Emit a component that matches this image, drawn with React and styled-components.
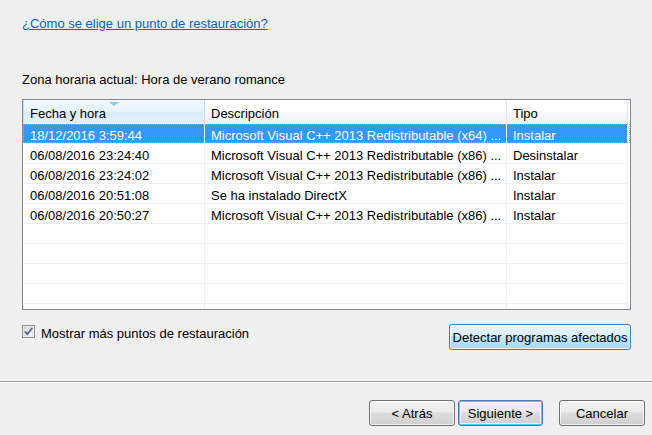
import React from "react";
import styled, { createGlobalStyle, css } from "styled-components";

const GlobalStyle = createGlobalStyle`
  html, body { margin: 0; padding: 0; background: #f0f0f0; }
  body { font-family: "Liberation Sans", Arial, sans-serif; font-size: 13px; color: #000; }
`;

const Page = styled.div`
  width: 652px;
  height: 435px;
  display: flex;
  flex-direction: column;
  background: #f0f0f0;
  overflow: hidden;
`;

const Content = styled.div`
  padding: 16px 21px 0 22px;
  display: flex;
  flex-direction: column;
`;

const HelpLink = styled.a`
  align-self: flex-start;
  color: #0066cc;
  text-decoration: underline;
  line-height: 15px;
  cursor: pointer;
`;

const Label = styled.div`
  margin-top: 41px;
  line-height: 15px;
`;

const ListView = styled.div`
  position: relative;
  margin-top: 12px;
  height: 209px;
  border: 1px solid #828790;
  background: #fff;
  overflow: hidden;
`;

const COLS = "182px 302px 121px";

const HeaderRow = styled.div`
  display: grid;
  grid-template-columns: ${COLS};
  height: 24px;
`;

const HeaderCell = styled.div`
  position: relative;
  padding: 6px 0 0 ${(p) => p.$pad || 6}px;
  line-height: 15px;
  border-right: 1px solid ${(p) => (p.$sorted ? "#c0e3f5" : "#e4e6e9")};
  background: ${(p) =>
    p.$sorted
      ? "linear-gradient(#f2f9fd 0%, #e5f3fb 50%, #d7ecf8 51%, #e4f2fa 100%)"
      : "linear-gradient(#ffffff 0%, #ffffff 45%, #f6f7f8 55%, #f2f3f4 100%)"};
  ${(p) =>
    p.$sorted &&
    css`
      box-shadow: inset 1px 0 0 #c0e3f5;
    `}
`;

const SortArrow = styled.span`
  position: absolute;
  top: 2px;
  left: 50%;
  margin-left: -5px;
  width: 0;
  height: 0;
  border-left: 5px solid transparent;
  border-right: 5px solid transparent;
  border-top: 4px solid #97c6e3;
`;

const Row = styled.div`
  position: relative;
  display: grid;
  grid-template-columns: ${COLS};
  height: 20px;
  ${(p) =>
    p.$selected &&
    css`
      color: #fff;
    `}
`;

const Cell = styled.div`
  height: 19px;
  padding: 4px 0 0 ${(p) => p.$pad || 6}px;
  box-sizing: border-box;
  line-height: 15px;
  white-space: nowrap;
  overflow: hidden;
  border-right: 1px solid ${(p) => (p.$selected ? "#fff" : "#f0f0f0")};
  border-bottom: 1px solid #f0f0f0;
  background: ${(p) => (p.$selected ? "#3399ff" : "transparent")};
  height: 20px;
`;

const FocusRing = styled.span`
  position: absolute;
  inset: 0 0 1px 0;
  outline: 1px dotted #f0a040;
  outline-offset: -1px;
  pointer-events: none;
`;

const BottomRow = styled.div`
  margin-top: 14px;
  display: flex;
  justify-content: space-between;
  align-items: flex-start;
`;

const CheckLabel = styled.label`
  display: flex;
  align-items: flex-start;
  gap: 6px;
  line-height: 15px;
`;

const CheckBox = styled.span`
  margin-top: 1px;
  width: 13px;
  height: 13px;
  display: block;
`;

const CheckText = styled.span`
  margin-top: 2px;
`;

const Button = styled.button`
  font-family: inherit;
  font-size: 13px;
  color: #000;
  height: 26px;
  width: ${(p) => p.$w}px;
  padding: 0;
  border-radius: 3px;
  line-height: 15px;
  border: 1px solid ${(p) => (p.$default || p.$hover ? "#3c7fb1" : "#707070")};
  background: ${(p) =>
    p.$hover
      ? "linear-gradient(#eaf6fd 0%, #d9f0fc 45%, #bee6fd 50%, #a7d9f5 100%)"
      : "linear-gradient(#f2f2f2 0%, #ebebeb 45%, #dddddd 50%, #cfcfcf 100%)"};
  box-shadow: ${(p) =>
    p.$default
      ? "inset 0 0 0 1px #48d3fb, inset 0 0 0 2px rgba(255,255,255,0.6)"
      : "inset 0 0 0 1px rgba(255,255,255,0.75)"};
`;

const Separator = styled.div`
  margin-top: 31px;
  height: 1px;
  background: #a0a0a0;
  border-bottom: 1px solid #ffffff;
`;

const Footer = styled.div`
  padding: 17px 7px 0 0;
  display: flex;
  justify-content: flex-end;
`;

const FooterGroup = styled.div`
  display: flex;
  gap: 3px;
  margin-right: 16px;
`;

const rows = [
  ["18/12/2016 3:59:44", "Microsoft Visual C++ 2013 Redistributable (x64) ...", "Instalar"],
  ["06/08/2016 23:24:40", "Microsoft Visual C++ 2013 Redistributable (x86) ...", "Desinstalar"],
  ["06/08/2016 23:24:02", "Microsoft Visual C++ 2013 Redistributable (x86) ...", "Instalar"],
  ["06/08/2016 20:51:08", "Se ha instalado DirectX", "Instalar"],
  ["06/08/2016 20:50:27", "Microsoft Visual C++ 2013 Redistributable (x86) ...", "Instalar"],
];

function CheckIcon() {
  return (
    <svg width="13" height="13" viewBox="0 0 13 13">
      <defs>
        <linearGradient id="cbg" x1="0" y1="0" x2="1" y2="1">
          <stop offset="0" stopColor="#dcdcdc" />
          <stop offset="1" stopColor="#ffffff" />
        </linearGradient>
      </defs>
      <rect x="0.5" y="0.5" width="12" height="12" fill="#f4f4f4" stroke="#8e8f8f" />
      <rect x="2" y="2" width="9" height="9" fill="url(#cbg)" stroke="#c6c6c6" strokeWidth="0.5" />
      <path d="M3 6.5 L5.3 9.2 L10.2 3" fill="none" stroke="#4a5f97" strokeWidth="1.8" strokeLinejoin="round" />
    </svg>
  );
}

export default function App() {
  const empty = Array.from({ length: 5 });
  return (
    <Page>
      <GlobalStyle />
      <Content>
        <HelpLink>¿Cómo se elige un punto de restauración?</HelpLink>
        <Label>Zona horaria actual: Hora de verano romance</Label>
        <ListView>
          <HeaderRow>
            <HeaderCell $sorted $pad={7}>
              <SortArrow />
              Fecha y hora
            </HeaderCell>
            <HeaderCell>Descripción</HeaderCell>
            <HeaderCell>Tipo</HeaderCell>
          </HeaderRow>
          {rows.map((r, i) => (
            <Row key={i} $selected={i === 0}>
              <Cell $selected={i === 0} $pad={7}>{r[0]}</Cell>
              <Cell $selected={i === 0}>{r[1]}</Cell>
              <Cell $selected={i === 0}>{r[2]}</Cell>
              {i === 0 && <FocusRing />}
            </Row>
          ))}
          {empty.map((_, i) => (
            <Row key={"e" + i}>
              <Cell />
              <Cell />
              <Cell />
            </Row>
          ))}
        </ListView>
        <BottomRow>
          <CheckLabel>
            <CheckBox>
              <CheckIcon />
            </CheckBox>
            <CheckText>Mostrar más puntos de restauración</CheckText>
          </CheckLabel>
          <Button $hover $w={182}>Detectar programas afectados</Button>
        </BottomRow>
      </Content>
      <Separator />
      <Footer>
        <FooterGroup>
          <Button $w={86}>&lt; Atrás</Button>
          <Button $default $w={85}>Siguiente &gt;</Button>
        </FooterGroup>
        <Button $w={86}>Cancelar</Button>
      </Footer>
    </Page>
  );
}
